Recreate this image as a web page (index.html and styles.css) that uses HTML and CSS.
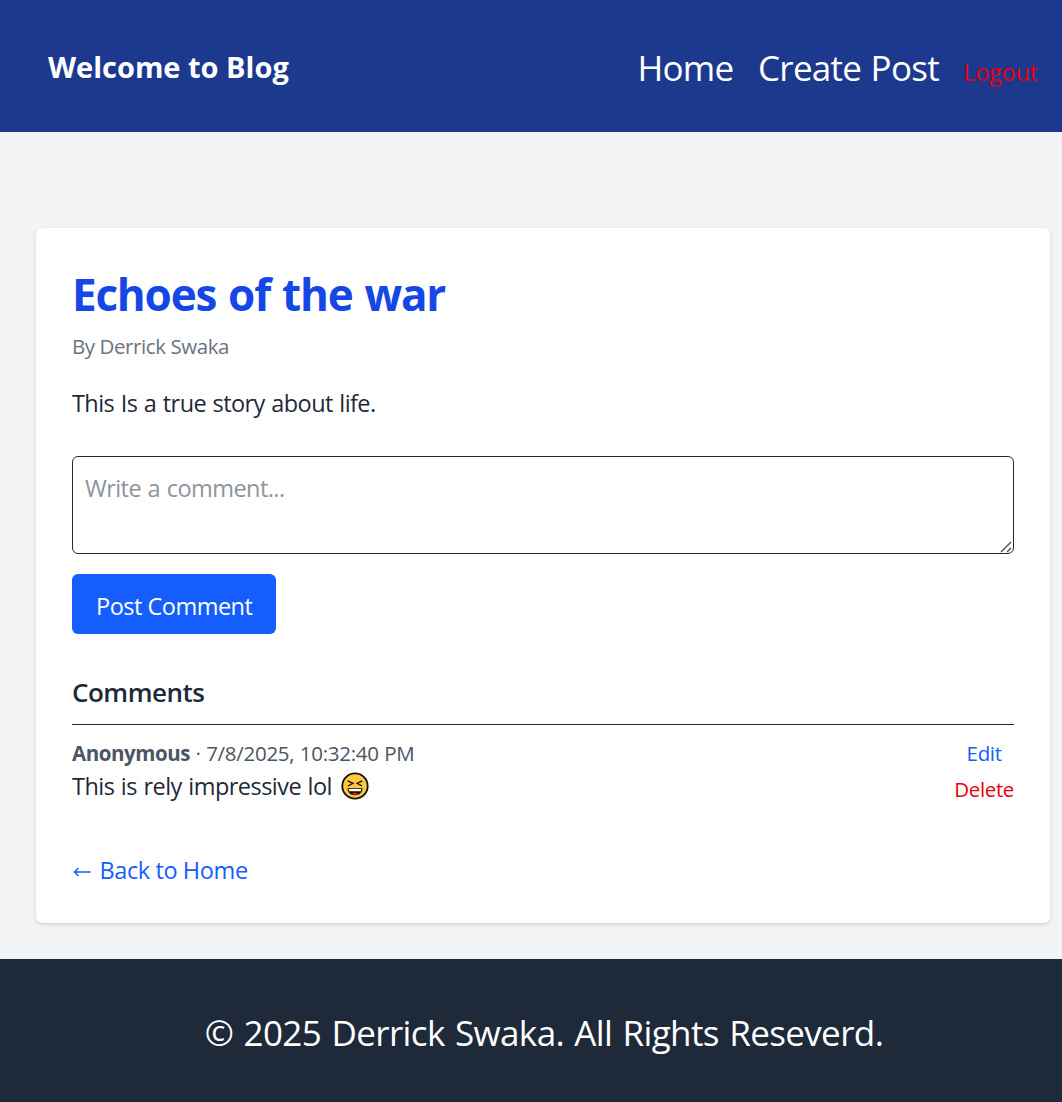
FILE: index.html
```html
<!DOCTYPE html>
<html lang="en">
<head>
<meta charset="utf-8">
<title>Blog</title>
<link rel="stylesheet" href="styles.css">
</head>
<body>
<header class="header">
  <h1 class="brand">Welcome to Blog</h1>
  <nav class="nav">
    <a class="nav-home">Home</a>
    <a class="nav-create">Create Post</a>
    <button class="logout">Logout</button>
  </nav>
</header>
<main class="card">
  <h2 class="title">Echoes of the war</h2>
  <p class="author">By Derrick Swaka</p>
  <p class="content">This Is a true story about life.</p>
  <div class="field">
    <textarea class="input" placeholder="Write a comment..."></textarea>
    <svg class="grip" viewBox="0 0 12 12"><path d="M1 11L11 1M7 11l4-4" fill="none" stroke="#555" stroke-width="1.5"/></svg>
  </div>
  <button class="submit">Post Comment</button>
  <h3 class="subtitle">Comments</h3>
  <div class="comment">
    <div class="comment-body">
      <p class="meta"><strong class="name">Anonymous</strong><span class="date"> · 7/8/2025, 10:32:40 PM</span></p>
      <p class="text"><span class="message">This is rely impressive lol</span>
        <svg class="emoji" viewBox="0 0 28 28" role="img" aria-label="laughing">
          <circle cx="14" cy="14" r="12.700" fill="#ffc83d" stroke="#111" stroke-width="1.800"/>
          <path d="M6.700 8.800l5.300 2.500-5 2.700M21.300 8.800L16 11.300l5 2.700" fill="none" stroke="#111" stroke-width="1.300"/>
          <path d="M6.500 16.300h15c0 4.200-3 7-7.500 7s-7.500-2.800-7.500-7z" fill="#111"/>
          <path d="M7.700 17h12.600l-.6 2.300H8.300z" fill="#fff"/>
          <path d="M10.800 22c1.500-1.700 4.900-1.700 6.400 0-1.700 1-4.700 1-6.400 0z" fill="#e3220f"/>
        </svg>
      </p>
    </div>
    <div class="actions">
      <button class="edit">Edit</button>
      <button class="delete">Delete</button>
    </div>
  </div>
  <a class="back"><svg class="arrow" viewBox="0 0 20 14"><path d="M18.500 7H2.500M6.500 3L2.500 7l4 4" fill="none" stroke="currentColor" stroke-width="1.500"/></svg><span>Back to Home</span></a>
</main>
<footer class="footer"><p class="copyright">© 2025 Derrick Swaka. All Rights Reseverd.</p></footer>
</body>
</html>
```
FILE: styles.css
```css
* { box-sizing: border-box; margin: 0; padding: 0; }
body {
  min-height: 1102px;
  display: flex;
  flex-direction: column;
  background: #f3f4f6;
  color: #1e2939;
  font-family: "Open Sans", "Noto Sans", sans-serif;
  font-size: 24px;
  line-height: 36px;
}
button {
  border: 0;
  background: none;
  font: inherit;
  letter-spacing: inherit;
}
.header {
  height: 132px;
  padding: 4px 24px 0 48px;
  display: flex;
  align-items: center;
  justify-content: space-between;
  background: #1c398e;
  color: #fff;
}
.brand { margin-top: -2px; font-size: 29px; font-weight: 700; line-height: 40px; }
.nav { display: flex; align-items: baseline; gap: 24.500px; font-size: 35px; line-height: 54px; letter-spacing: -.72px; word-spacing: 1px; }
.logout { font-size: 23px; color: #e7000b; line-height: 36px; letter-spacing: 0; }
.card {
  margin: 96px 12px 36px 36px;
  height: 695px;
  padding: 36px;
  display: flex;
  flex-direction: column;
  align-items: flex-start;
  background: #fff;
  border-radius: 6px;
  box-shadow: 0 1.5px 4.5px rgba(0, 0, 0, .1), 0 1.5px 3px -1.5px rgba(0, 0, 0, .1);
}
.card > * { flex-shrink: 0; }
.title { margin-bottom: 12px; font-size: 44px; line-height: 60px; font-weight: 700; color: #1447e6; letter-spacing: -1.200px; word-spacing: 1.800px; }
.author { margin-top: -5px; font-size: 20.500px; line-height: 30px; color: #6a7282; letter-spacing: -.42px; }
.content { margin: 24px 0 35px; font-size: 23.500px; letter-spacing: -.58px; word-spacing: 1px; }
.field { position: relative; width: 100%; height: 98px; margin-bottom: 20px; }
.input {
  display: block;
  width: 100%;
  height: 98px;
  padding: 13px 12px 11px;
  border: 1px solid #1e2939;
  border-radius: 6px;
  font: inherit;
  font-size: 23.500px;
  letter-spacing: -.55px;
  word-spacing: 1px;
  color: inherit;
  background: #fff;
  resize: none;
}
.input::placeholder { color: #8e949c; }
.grip { position: absolute; right: 2px; bottom: 1px; width: 12px; height: 12px; }
.submit { height: 60px; padding: 3px 24px 0; border-radius: 6px; background: #155dfc; color: #fff; font-size: 23.500px; letter-spacing: -.5px; }
.subtitle { margin: 38px 0 12px; font-size: 26px; line-height: 40px; font-weight: 600; letter-spacing: -.5px; }
.comment { width: 100%; padding-top: 13px; display: flex; justify-content: space-between; border-top: 1px solid #1e2939; }
.meta { font-size: 20.500px; line-height: 30px; color: #4a5565; white-space: pre; letter-spacing: -.28px; word-spacing: .5px; }
.name { letter-spacing: -.44px; }
.text { display: flex; align-items: center; gap: 9px; font-size: 23.500px; letter-spacing: -.53px; word-spacing: .9px; }
.emoji { width: 28px; height: 28px; }
.actions { display: flex; flex-direction: column; align-items: center; gap: 6px; font-size: 20.500px; line-height: 30px; letter-spacing: -.35px; }
.edit { color: #155dfc; }
.delete { color: #e7000b; }
.back { margin-top: 48px; display: flex; align-items: center; gap: 7.500px; color: #155dfc; font-size: 23.500px; letter-spacing: -.4px; }
.arrow { width: 20px; height: 14px; margin-top: 4px; }
.footer { flex: 1; padding: 47px 0 0 26px; text-align: center; background: #1e2939; color: #fff; }
.copyright { font-size: 35px; line-height: 54px; letter-spacing: -.62px; word-spacing: 1.800px; }
```
